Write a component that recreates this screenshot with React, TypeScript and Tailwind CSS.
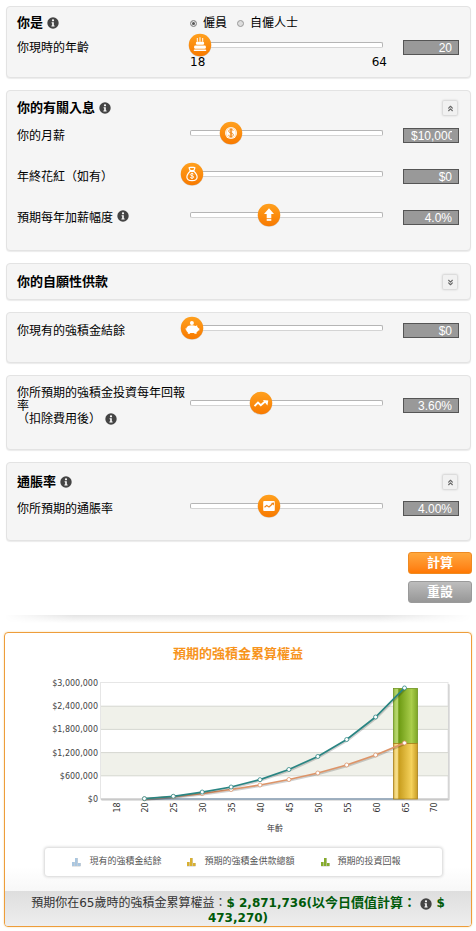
import React, { useState } from 'react';
import { ChevronsDown, ChevronsUp } from 'lucide-react';

function InfoIcon() {
  return (
    <svg width="12" height="12" viewBox="0 0 12 12" className="inline-block shrink-0" aria-hidden="true">
      <circle cx="6" cy="6" r="5.7" fill="#444" />
      <circle cx="6" cy="3.3" r="1.1" fill="#fff" />
      <path d="M4.6 5.2h2.2v3.4h.8v1H4.4v-1h.8V6.2h-.6z" fill="#fff" />
    </svg>
  );
}

function CakeIcon() {
  return (
    <g fill="#fff">
      <path d="M8.3 4.4h1v3.8h-1zM11 3.8h1v4.4h-1zM13.7 4.4h1v3.8h-1z" />
      <rect x="7.4" y="8.2" width="8.2" height="3" rx="1.2" />
      <rect x="5.6" y="12" width="11.8" height="3.2" rx="1.3" />
      <rect x="5.2" y="16" width="12.6" height="1.6" rx="0.8" />
    </g>
  );
}

function CoinIcon() {
  return (
    <g>
      <circle cx="11.5" cy="11.5" r="6" fill="#fff" />
      <circle cx="11.5" cy="11.5" r="5" fill="none" stroke="#ffc27a" strokeWidth="0.6" />
      <path
        d="M13.9 9.4c-.3-1-1.2-1.4-2.4-1.4-1.3 0-2.3.6-2.3 1.7 0 2.4 4.7 1.1 4.7 3.6 0 1.1-1 1.7-2.4 1.7-1.3 0-2.3-.5-2.5-1.6M10.9 6.9v9.2M12.1 6.9v9.2"
        fill="none"
        stroke="#f08a1c"
        strokeWidth="0.9"
      />
    </g>
  );
}

function MoneyBagIcon() {
  return (
    <g fill="none" stroke="#fff" strokeWidth="1.2" strokeLinejoin="round">
      <path d="M9.7 8.2L8.6 5.2c1-.9 1.8.2 2.9-.5 1.1.7 1.9-.4 2.9.5l-1.1 3z" />
      <path d="M9.7 8.8h3.6c2.2 2 3.5 4.1 3.3 6.2-.2 2.2-1.8 3.1-5.1 3.1s-4.9-.9-5.1-3.1c-.2-2.1 1.1-4.2 3.3-6.2z" />
      <path
        d="M13.2 11.9c-.2-.6-.8-.9-1.7-.9-1 0-1.6.4-1.6 1.1 0 1.6 3.3.8 3.3 2.4 0 .8-.7 1.2-1.7 1.2-.9 0-1.6-.3-1.7-1M11.5 10.2v6.3"
        strokeWidth="0.9"
      />
    </g>
  );
}

function ArrowUpIcon() {
  return (
    <g fill="#fff">
      <path d="M11.5 4.8l5 5.7h-2.7v4.3H9.2v-4.3H6.500z" />
      <rect x="9.2" y="15.6" width="4.6" height="1.7" />
    </g>
  );
}

function PiggyIcon() {
  return (
    <g fill="#fff">
      <circle cx="11.4" cy="6.5" r="2" />
      <path d="M7.5 9.6c2.2-1.2 5.4-1.2 7.6-.2l1.6-.7v1.6c.6.5 1 .9 1.2 1.4h.9v2.4h-1c-.4.7-1 1.2-1.7 1.6v1.6h-2.3v-.9H9.600v.9H7.3v-1.500c-1-.7-1.7-1.6-1.7-2.7-.5 0-.9-.3-1.2-.8l.5-.4c.2.3.4.4.8.4.2-.8.9-1.9 1.8-2.7z" />
    </g>
  );
}

function TrendIcon() {
  return (
    <g>
      <path d="M5 14.6l3.5-3.5 2.8 2.6 4.3-3.6" fill="none" stroke="#fff" strokeWidth="1.9" />
      <path d="M13.4 8.5l5.4.5-.9 5z" fill="#fff" />
    </g>
  );
}

function ChartIcon() {
  return (
    <g>
      <rect x="5.7" y="6.5" width="11.6" height="10" rx="1" fill="#fff" />
      <path d="M7 12.7l2.2-1.7 2.3 1.5 3.3-3" fill="none" stroke="#f0861a" strokeWidth="1.2" />
      <path d="M13.5 8.4l3.2-.3-.5 3z" fill="#f0861a" />
    </g>
  );
}

type SliderRowProps = {
  id: string;
  label: React.ReactNode;
  name: string;
  icon: React.ReactNode;
  initial: number;
  min?: number;
  max: number;
  step?: number;
  format: (value: number) => string;
  showScale?: boolean;
  multiline?: boolean;
};

function SliderRow({
  id,
  label,
  name,
  icon,
  initial,
  min = 0,
  max,
  step = 1,
  format,
  showScale,
  multiline,
}: SliderRowProps) {
  const [value, setValue] = useState(initial);
  const percent = ((value - min) / (max - min)) * 100;

  return (
    <div className={multiline ? 'flex items-start' : 'flex min-h-[15px] items-start'}>
      <label
        htmlFor={id}
        className={
          multiline
            ? 'w-[173px] shrink-0 pr-1 pt-px leading-[13px]'
            : '-mb-[2px] w-[173px] shrink-0 leading-[17px]'
        }
      >
        {label}
      </label>
      <div className={multiline ? 'mt-3 min-w-0 flex-1' : 'min-w-0 flex-1'}>
        <div className="relative flex h-[10px] items-center">
          <div className="h-[6px] w-full rounded-[2px] border border-[#b5b5b5] border-b-[#d4d4d4] bg-white" />
          <div className="pointer-events-none absolute inset-y-0 left-[2px] w-full">
            <svg
              width="23"
              height="23"
              viewBox="0 0 23 23"
              className="absolute top-1/2 -translate-x-1/2 -translate-y-1/2 overflow-visible"
              style={{ left: `${percent}%` }}
              aria-hidden="true"
            >
              <circle cx="11.5" cy="12" r="11.3" fill="#b9b0a4" opacity="0.6" />
              <circle cx="11.5" cy="11.5" r="11.2" fill="url(#knob)" />
              {icon}
            </svg>
          </div>
          <input
            id={id}
            type="range"
            min={min}
            max={max}
            step={step}
            value={value}
            onChange={(e) => setValue(Number(e.target.value))}
            className="absolute inset-0 m-0 w-full cursor-pointer opacity-0"
          />
        </div>
        {showScale && (
          <div className="-mr-1 mt-[5px] flex justify-between leading-[14px]">
            <span>{min}</span>
            <span>{max}</span>
          </div>
        )}
      </div>
      <input
        type="text"
        readOnly
        aria-label={name}
        value={format(value)}
        className={`ml-5 h-[15px] w-[56px] shrink-0 border border-[#555] bg-[#999] pl-[7px] pr-[6px] text-right font-['Liberation_Sans','Noto_Sans_CJK_TC',sans-serif] text-[12px] leading-[13px] text-white outline-none ${
          multiline ? 'mt-3' : ''
        }`}
      />
    </div>
  );
}

function Panel({ className, children }: { className: string; children: React.ReactNode }) {
  return (
    <section
      className={`rounded-[4px] border border-[#e3e3e3] bg-[#f5f5f5] pl-[10px] pr-[11px] shadow-[0_1px_1px_#ececec] ${className}`}
    >
      {children}
    </section>
  );
}

function ToggleButton({ open, name }: { open: boolean; name: string }) {
  const Icon = open ? ChevronsUp : ChevronsDown;
  return (
    <button
      type="button"
      aria-label={name}
      aria-expanded={open}
      className="mr-[2px] flex h-[14px] w-[14px] items-center justify-center rounded-[1px] bg-[#f1f1f1] text-[#666] shadow-[0_0_2px_1px_#d2d2d2]"
    >
      <Icon size={9} strokeWidth={3} />
    </button>
  );
}

function PanelHeading({ title, info, open }: { title: string; info?: boolean; open: boolean }) {
  return (
    <div className="flex h-5 items-center justify-between">
      <div className="flex items-center gap-1">
        <h2 className="text-[13px] font-bold leading-5">{title}</h2>
        {info && <InfoIcon />}
      </div>
      <ToggleButton open={open} name={title} />
    </div>
  );
}

const AGES = [18, 20, 25, 30, 35, 40, 45, 50, 55, 60, 65, 70];
const Y_TICKS = [3000000, 2400000, 1800000, 1200000, 600000, 0];
const TOTAL = [10000, 70000, 180000, 310000, 500000, 763000, 1100000, 1539000, 2120000, 2871736];
const CONTRIBUTIONS = [5000, 60000, 140000, 246000, 362000, 504000, 672000, 879000, 1138000, 1450000];

const xAt = (index: number) => 110.5 + index * 28.9;
const yAt = (value: number) => 136 - (value / 3000000) * 116;
const dollars = (value: number) => `$${value.toLocaleString('en-US')}`;

function Line({ values, color }: { values: number[]; color: string }) {
  const points = values.map((v, i) => `${xAt(i + 1)},${yAt(v)}`).join(' ');
  return (
    <g>
      <polyline points={points} fill="none" stroke="#000" strokeOpacity="0.18" strokeWidth="2" transform="translate(1 1)" />
      <polyline points={points} fill="none" stroke={color} strokeWidth="1.7" />
      {values.map((v, i) => (
        <circle key={i} cx={xAt(i + 1)} cy={yAt(v)} r="2" fill="#fff" stroke={color} strokeWidth="0.8" />
      ))}
    </g>
  );
}

function BenefitChart() {
  const last = xAt(10);
  const top = yAt(2871736);
  const mid = yAt(1450000);

  return (
    <svg
      viewBox="0 0 466 177"
      className="block h-auto w-full font-['DejaVu_Sans','Noto_Sans_CJK_TC',sans-serif] text-[8px]"
      role="img"
      aria-label="預期的強積金累算權益"
    >
      <defs>
        <linearGradient id="greenBar">
          <stop offset="0" stopColor="#8db63c" />
          <stop offset="0.1" stopColor="#b4d46a" />
          <stop offset="0.18" stopColor="#b4d46a" />
          <stop offset="0.22" stopColor="#6c9a12" />
          <stop offset="0.75" stopColor="#aace4c" />
          <stop offset="1" stopColor="#7ea626" />
        </linearGradient>
        <linearGradient id="yellowBar">
          <stop offset="0" stopColor="#d9b040" />
          <stop offset="0.1" stopColor="#f6df8e" />
          <stop offset="0.18" stopColor="#f3d77c" />
          <stop offset="0.22" stopColor="#c79c1c" />
          <stop offset="0.75" stopColor="#f5d25c" />
          <stop offset="1" stopColor="#c99c24" />
        </linearGradient>
      </defs>

      <rect x="96" y="21" width="348.5" height="116.5" rx="1" fill="#c4c4c4" />
      <rect x="95.5" y="19.5" width="347.5" height="116.5" fill="#fff" stroke="#e6e6e6" />
      <rect x="96" y="43.2" width="347" height="23.2" fill="#f0f1ea" />
      <rect x="96" y="89.6" width="347" height="23.2" fill="#f0f1ea" />
      {Y_TICKS.map((tick) => (
        <g key={tick}>
          {tick > 0 && tick < 3000000 && (
            <line x1="96" x2="443" y1={yAt(tick)} y2={yAt(tick)} stroke="#d5d7d0" />
          )}
          <text x="93" y={yAt(tick) + 3} textAnchor="end" fill="#444">
            {dollars(tick)}
          </text>
        </g>
      ))}
      <line x1="96" x2="443" y1="136" y2="136" stroke="#bdbdbd" />
      <line x1={xAt(1)} x2={last} y1="136" y2="136" stroke="#8da3b8" strokeWidth="1.5" />

      <rect x={last - 11} y={top + 0.5} width="24" height={mid - top} fill="url(#greenBar)" stroke="#6f9420" strokeWidth="0.8" />
      <rect x={last - 11} y={mid + 0.5} width="24" height={135.5 - mid} fill="url(#yellowBar)" stroke="#a8811c" strokeWidth="0.8" />

      <Line values={CONTRIBUTIONS} color="#dd9468" />
      <Line values={TOTAL} color="#2a8583" />

      {AGES.map((age, i) => (
        <text key={age} transform={`translate(${xAt(i) + 4} 144.5) rotate(-90)`} textAnchor="middle" fill="#333">
          {age}
        </text>
      ))}
      <text x="270" y="167.5" textAnchor="middle" fill="#333">
        年齡
      </text>
    </svg>
  );
}

const LEGEND = [
  { label: '現有的強積金結餘', color: '#a9c6e0' },
  { label: '預期的強積金供款總額', color: '#d9b030' },
  { label: '預期的投資回報', color: '#86ac2c' },
];

function Legend() {
  return (
    <ul className="ml-10 mr-[29px] mt-2 flex h-[28px] items-center justify-center gap-[26px] rounded-[3px] bg-white pr-[14px] text-[9px] text-[#555] shadow-[0_0_3px_1px_#d4d4d4]">
      {LEGEND.map((item) => (
        <li key={item.label} className="flex items-center gap-2">
          <svg width="9" height="9" viewBox="0 0 9 9" fill={item.color} aria-hidden="true">
            <path d="M0 4h2.5v4H0zM3 0h2.5v8H3zM6 5h2.5v3H6z" />
            <path d="M2 4h.5v4H2zM5 0h.5v8H5zM8 5h.5v3H8zM0 8h8.5v.5H0z" fill="#000" fillOpacity="0.2" />
          </svg>
          {item.label}
        </li>
      ))}
    </ul>
  );
}

const percent1 = (v: number) => `${v.toFixed(1)}%`;
const percent2 = (v: number) => `${v.toFixed(2)}%`;

export default function App() {
  const [employment, setEmployment] = useState('employee');

  const radios = [
    { value: 'employee', label: '僱員' },
    { value: 'self', label: '自僱人士' },
  ];

  return (
    <main
      lang="zh-Hant"
      className="bg-white px-1 pb-[6px] pt-[6px] font-['DejaVu_Sans','Noto_Sans_CJK_TC',sans-serif] text-[12px] text-black"
    >
      <svg width="0" height="0" className="absolute" aria-hidden="true">
        <defs>
          <linearGradient id="knob" x1="0" y1="0" x2="0" y2="1">
            <stop offset="0" stopColor="#ffa01e" />
            <stop offset="1" stopColor="#f87a00" />
          </linearGradient>
        </defs>
      </svg>

      <form onSubmit={(e) => e.preventDefault()}>
        <div className="flex flex-col gap-3 pl-[2px] pr-px">
          <Panel className="pb-2 pt-[6px]">
            <div className="mb-[7px] flex h-5 items-center">
              <div className="flex w-[173px] shrink-0 items-center gap-1">
                <h2 className="text-[13px] font-bold leading-5">你是</h2>
                <InfoIcon />
              </div>
              <div className="flex gap-[10px]">
                {radios.map((radio) => (
                  <label key={radio.value} className="flex items-center gap-[6px] leading-5">
                    <input
                      type="radio"
                      name="employment"
                      value={radio.value}
                      checked={employment === radio.value}
                      onChange={() => setEmployment(radio.value)}
                      className="h-[7px] w-[7px] appearance-none rounded-full border border-[#999] bg-[#ddd] checked:bg-[#555] checked:shadow-[inset_0_0_0_1px_#eee]"
                    />
                    {radio.label}
                  </label>
                ))}
              </div>
            </div>
            <SliderRow
              id="age"
              name="你現時的年齡"
              label="你現時的年齡"
              icon={<CakeIcon />}
              initial={20}
              min={18}
              max={64}
              format={String}
              showScale
            />
          </Panel>

          <Panel className="pb-[25px] pt-[7px]">
            <PanelHeading title="你的有關入息" info open />
            <div className="mt-[10px] flex flex-col gap-[26px]">
              <SliderRow
                id="salary"
                name="你的月薪"
                label="你的月薪"
                icon={<CoinIcon />}
                initial={10000}
                max={50000}
                step={500}
                format={dollars}
              />
              <SliderRow
                id="bonus"
                name="年終花紅（如有）"
                label="年終花紅（如有）"
                icon={<MoneyBagIcon />}
                initial={0}
                max={500000}
                step={1000}
                format={dollars}
              />
              <SliderRow
                id="raise"
                name="預期每年加薪幅度"
                label={
                  <span className="flex items-start gap-1">
                    預期每年加薪幅度
                    <InfoIcon />
                  </span>
                }
                icon={<ArrowUpIcon />}
                initial={4}
                max={10}
                step={0.1}
                format={percent1}
              />
            </div>
          </Panel>

          <Panel className="pb-[7px] pt-2">
            <PanelHeading title="你的自願性供款" open={false} />
          </Panel>

          <Panel className="pb-6 pt-[10px]">
            <SliderRow
              id="balance"
              name="你現有的強積金結餘"
              label="你現有的強積金結餘"
              icon={<PiggyIcon />}
              initial={0}
              max={1000000}
              step={1000}
              format={dollars}
            />
          </Panel>

          <Panel className="pb-[23px] pt-[10px]">
            <SliderRow
              id="return"
              name="你所預期的強積金投資每年回報率"
              label={
                <>
                  你所預期的強積金投資每年回報率
                  <span className="flex items-start gap-1">
                    （扣除費用後）
                    <InfoIcon />
                  </span>
                </>
              }
              icon={<TrendIcon />}
              initial={3.6}
              max={10}
              step={0.1}
              format={percent2}
              multiline
            />
          </Panel>

          <Panel className="pb-6 pt-[9px]">
            <PanelHeading title="通脹率" info open />
            <div className="mt-[9px]">
              <SliderRow
                id="inflation"
                name="你所預期的通脹率"
                label="你所預期的通脹率"
                icon={<ChartIcon />}
                initial={4}
                max={10}
                step={0.1}
                format={percent2}
              />
            </div>
          </Panel>
        </div>

        <div className="mt-[11px] flex flex-col items-end gap-[7px] text-[13px] font-bold leading-5 text-white">
          <button
            type="submit"
            className="h-[22px] w-16 rounded-[3px] border border-[#ee8a22] bg-linear-to-b from-[#ffa83c] to-[#ff7800]"
          >
            計算
          </button>
          <button
            type="reset"
            className="h-[22px] w-16 rounded-[3px] border border-[#9a9a9a] bg-linear-to-b from-[#bdbdbd] to-[#979797]"
          >
            重設
          </button>
        </div>
      </form>

      <div className="mt-3 h-2 bg-linear-to-b from-[#e4e4e4] to-white [mask-image:linear-gradient(to_right,transparent,black_15%,black_80%,transparent)]" />

      <section className="mt-[9px] overflow-hidden rounded-[4px] border border-[#ee9d3a] bg-linear-to-b from-white from-80% to-[#ececec] shadow-[0_0_2px_#f3d9a0]">
        <h2 className="h-[30px] pt-[10px] text-center text-[13px] font-bold leading-[22px] text-[#f7941d]">
          預期的強積金累算權益
        </h2>
        <BenefitChart />
        <Legend />
        <p className="mt-[15px] bg-linear-to-b from-[#dedede] to-[#eeeeee] pt-1 text-center leading-[15px] text-[#333]">
          預期你在65歲時的強積金累算權益：
          <strong className="text-[#005a0a]">
            <span>$ 2,871,736(</span>
            <span className="text-[13px]">以今日價值計算：</span>{' '}
            <span className="inline-block h-3 align-middle leading-none">
              <InfoIcon />
            </span>{' '}
            <span>$</span> <span>473,270)</span>
          </strong>
        </p>
      </section>
    </main>
  );
}
